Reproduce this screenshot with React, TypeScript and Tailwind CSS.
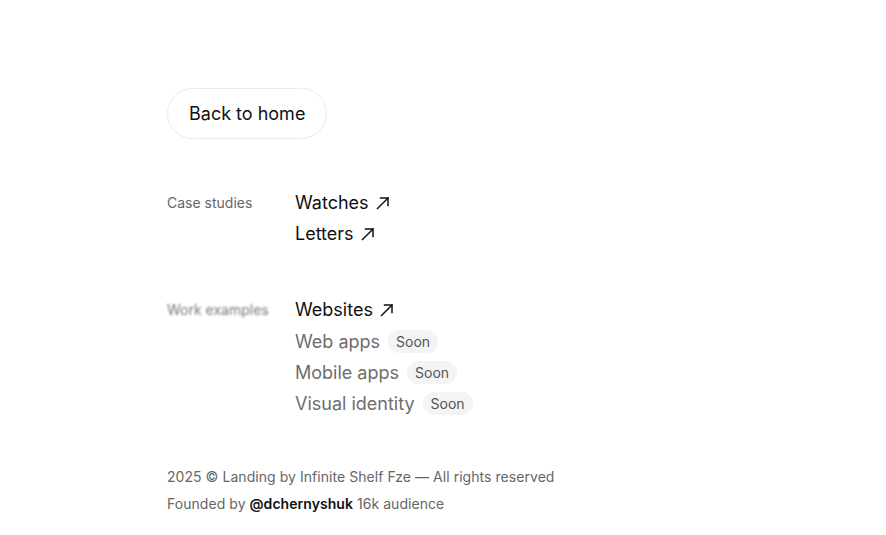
import React from 'react';

const Arrow = () => (
  <svg width="14" height="14" viewBox="0 0 14 14" fill="none" stroke="currentColor" strokeWidth="1.5" strokeLinecap="square" className="mt-[1px]">
    <path d="M1.5 12.5 L12 2" />
    <path d="M4.5 2 H12 V9.5" />
  </svg>
);

const Linked = ({ label }: { label: string }) => (
  <a href="#" className="flex items-center gap-[7px] h-[31px] text-[18px] text-[#111]">
    {label}
    <Arrow />
  </a>
);

const Soon = ({ label }: { label: string }) => (
  <div className="flex items-center gap-[8px] h-[31px] text-[18px] text-[#6e6e6e]">
    {label}
    <span className="rounded-full bg-[#f4f4f4] px-[8px] h-[23px] flex items-center text-[14px] text-[#555]">Soon</span>
  </div>
);

const App: React.FC = () => {
  return (
    <div className="min-h-screen bg-white pl-[167px] pt-[88px]" style={{ fontFamily: 'Inter, "Noto Sans", sans-serif' }}>
      <button className="h-[51px] px-[21px] rounded-full border border-[#ececec] text-[18px] text-[#111]">
        Back to home
      </button>

      {/* CASE STUDIES */}
      <div className="flex mt-[48px]">
        <div className="w-[128px] pt-[5px] text-[14px] text-[#666]">Case studies</div>
        <div className="flex flex-col">
          <Linked label="Watches" />
          <Linked label="Letters" />
        </div>
      </div>

      {/* WORK EXAMPLES */}
      <div className="flex mt-[45px]">
        <div className="w-[128px] pt-[5px] text-[14px] text-[#777] blur-[1px]">Work examples</div>
        <div className="flex flex-col">
          <Linked label="Websites" />
          <div className="mt-[1px]">
            <Soon label="Web apps" />
            <Soon label="Mobile apps" />
            <Soon label="Visual identity" />
          </div>
        </div>
      </div>

      {/* FOOTER */}
      <div className="mt-[44px] text-[14px] text-[#666] leading-[27px] tracking-[0.05px]">
        <p>2025 © Landing by Infinite Shelf Fze — All rights reserved</p>
        <p>
          Founded by <span className="font-semibold text-[#111]">@dchernyshuk</span> 16k audience
        </p>
      </div>
    </div>
  );
};

export default App;
